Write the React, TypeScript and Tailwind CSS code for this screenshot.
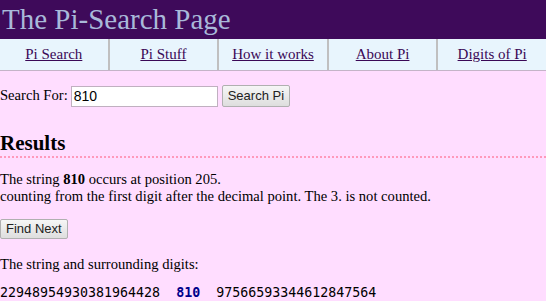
import React from "react";

const serif = { fontFamily: '"Liberation Serif", "Times New Roman", serif' };
const sans = { fontFamily: '"Liberation Sans", Arial, sans-serif' };

export default function App() {
  const links = ["Pi Search", "Pi Stuff", "How it works", "About Pi", "Digits of Pi"];
  return (
    <div className="min-h-[301px] w-[546px] bg-[#ffddff] text-[16px] text-black overflow-hidden" style={serif}>
      <div className="h-[39px] bg-[#3e0a5a] pl-[2px] text-[29px] leading-[39px] text-[#a9b9d9] whitespace-nowrap">
        The Pi-Search Page
      </div>
      <div className="flex h-[32px] bg-[#e8f5fd] border-b border-[#c4b4c8]">
        {links.map((l, i) => (
          <div
            key={l}
            className={`flex-1 flex items-center justify-center ${i < 4 ? "border-r-2 border-[#c0c0c0]" : ""}`}
          >
            <a className="underline text-[#3a0856] text-[15px]">{l}</a>
          </div>
        ))}
      </div>
      <div className="flex items-center mt-[14px] h-[22px]">
        <span className="text-[14.6px] mr-[3px]">Search For:</span>
        <div
          className="w-[147px] h-[21px] bg-white border border-[#c0b0c0] pl-[2px] text-[14px] leading-[19px]"
          style={sans}
        >
          810
        </div>
        <button
          className="ml-[4px] h-[22px] px-[5px] border border-[#b0b0b0] rounded-[2px] bg-gradient-to-b from-[#f6f6f6] to-[#dedede] text-[13px] text-[#222]"
          style={sans}
        >
          Search Pi
        </button>
      </div>
      <div className="mt-[23px] text-[21px] font-bold leading-[26px] pb-0 border-b-2 border-dotted border-[#ff99bb]">
        Results
      </div>
      <div className="mt-[13px] text-[14.6px] leading-[17px]">
        <div>
          The string <b>810</b> occurs at position 205.
        </div>
        <div>counting from the first digit after the decimal point. The 3. is not counted.</div>
      </div>
      <button
        className="mt-[14px] h-[20px] px-[5px] border border-[#b0b0b0] rounded-[2px] bg-gradient-to-b from-[#f6f6f6] to-[#dedede] text-[13px] text-[#222] leading-[18px]"
        style={sans}
      >
        Find Next
      </button>
      <div className="mt-[16px] text-[14.6px] leading-[17px]">The string and surrounding digits:</div>
      <div
        className="mt-[12px] text-[13.3px] leading-[16px] whitespace-pre"
        style={{ fontFamily: '"DejaVu Sans Mono", "Liberation Mono", monospace' }}
      >
        {"22948954930381964428  "}
        <span className="text-[#00008b] font-bold">810</span>
        {"  97566593344612847564"}
      </div>
    </div>
  );
}
